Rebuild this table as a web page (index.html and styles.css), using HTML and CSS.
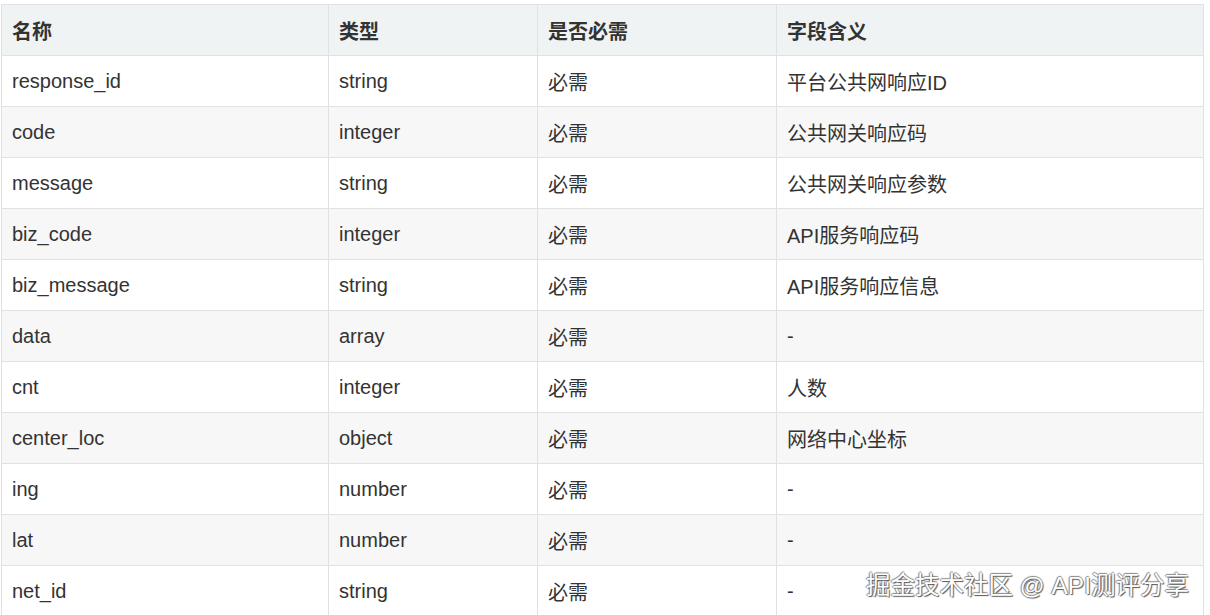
FILE: index.html
```html
<!DOCTYPE html>
<html lang="zh">
<head>
<meta charset="utf-8">
<link rel="stylesheet" href="styles.css">
</head>
<body>
<div class="page">
  <table class="fields">
    <colgroup>
      <col class="c1"><col class="c2"><col class="c3"><col class="c4">
    </colgroup>
    <thead>
      <tr><th>名称</th><th>类型</th><th>是否必需</th><th>字段含义</th></tr>
    </thead>
    <tbody>
      <tr><td>response_id</td><td>string</td><td>必需</td><td>平台公共网响应ID</td></tr>
      <tr><td>code</td><td>integer</td><td>必需</td><td>公共网关响应码</td></tr>
      <tr><td>message</td><td>string</td><td>必需</td><td>公共网关响应参数</td></tr>
      <tr><td>biz_code</td><td>integer</td><td>必需</td><td>API服务响应码</td></tr>
      <tr><td>biz_message</td><td>string</td><td>必需</td><td>API服务响应信息</td></tr>
      <tr><td>data</td><td>array</td><td>必需</td><td>-</td></tr>
      <tr><td>cnt</td><td>integer</td><td>必需</td><td>人数</td></tr>
      <tr><td>center_loc</td><td>object</td><td>必需</td><td>网络中心坐标</td></tr>
      <tr><td>ing</td><td>number</td><td>必需</td><td>-</td></tr>
      <tr><td>lat</td><td>number</td><td>必需</td><td>-</td></tr>
      <tr><td>net_id</td><td>string</td><td>必需</td><td>-</td></tr>
    </tbody>
  </table>
  <div class="watermark">掘金技术社区 @ API测评分享</div>
</div>
</body>
</html>
```

FILE: styles.css
```css
html, body {
  margin: 0;
  padding: 0;
  background: #ffffff;
  overflow: hidden;
}
.page {
  position: relative;
  width: 1210px;
  height: 615px;
  padding: 4px 0 0 1px;
  box-sizing: border-box;
  font-family: "Liberation Sans", Arial, "Noto Sans CJK SC", sans-serif;
  color: #333333;
  overflow: hidden;
}
.fields {
  border-collapse: collapse;
  table-layout: fixed;
  width: 1202px;
  font-size: 20px;
}
.c1 { width: 327px; }
.c2 { width: 209px; }
.c3 { width: 239px; }
.c4 { width: 427px; }
.fields th,
.fields td {
  border: 1px solid #dfe2e5;
  height: 51px;
  padding: 0 10px;
  box-sizing: border-box;
  text-align: left;
  vertical-align: middle;
  white-space: nowrap;
}
.fields th {
  background: #f0f3f4;
  font-weight: bold;
  color: #333333;
}
.fields tbody tr:nth-child(even) td {
  background: #f7f7f7;
}
.watermark {
  position: absolute;
  left: 866px;
  top: 566px;
  font-size: 24.5px;
  color: #ffffff;
  font-family: "Liberation Sans", Arial, "Noto Sans CJK SC", sans-serif;
  text-shadow: 1px 1px 1px #555, -1px 0 1px #888, 0 -1px 1px #888;
  white-space: nowrap;
}
```
